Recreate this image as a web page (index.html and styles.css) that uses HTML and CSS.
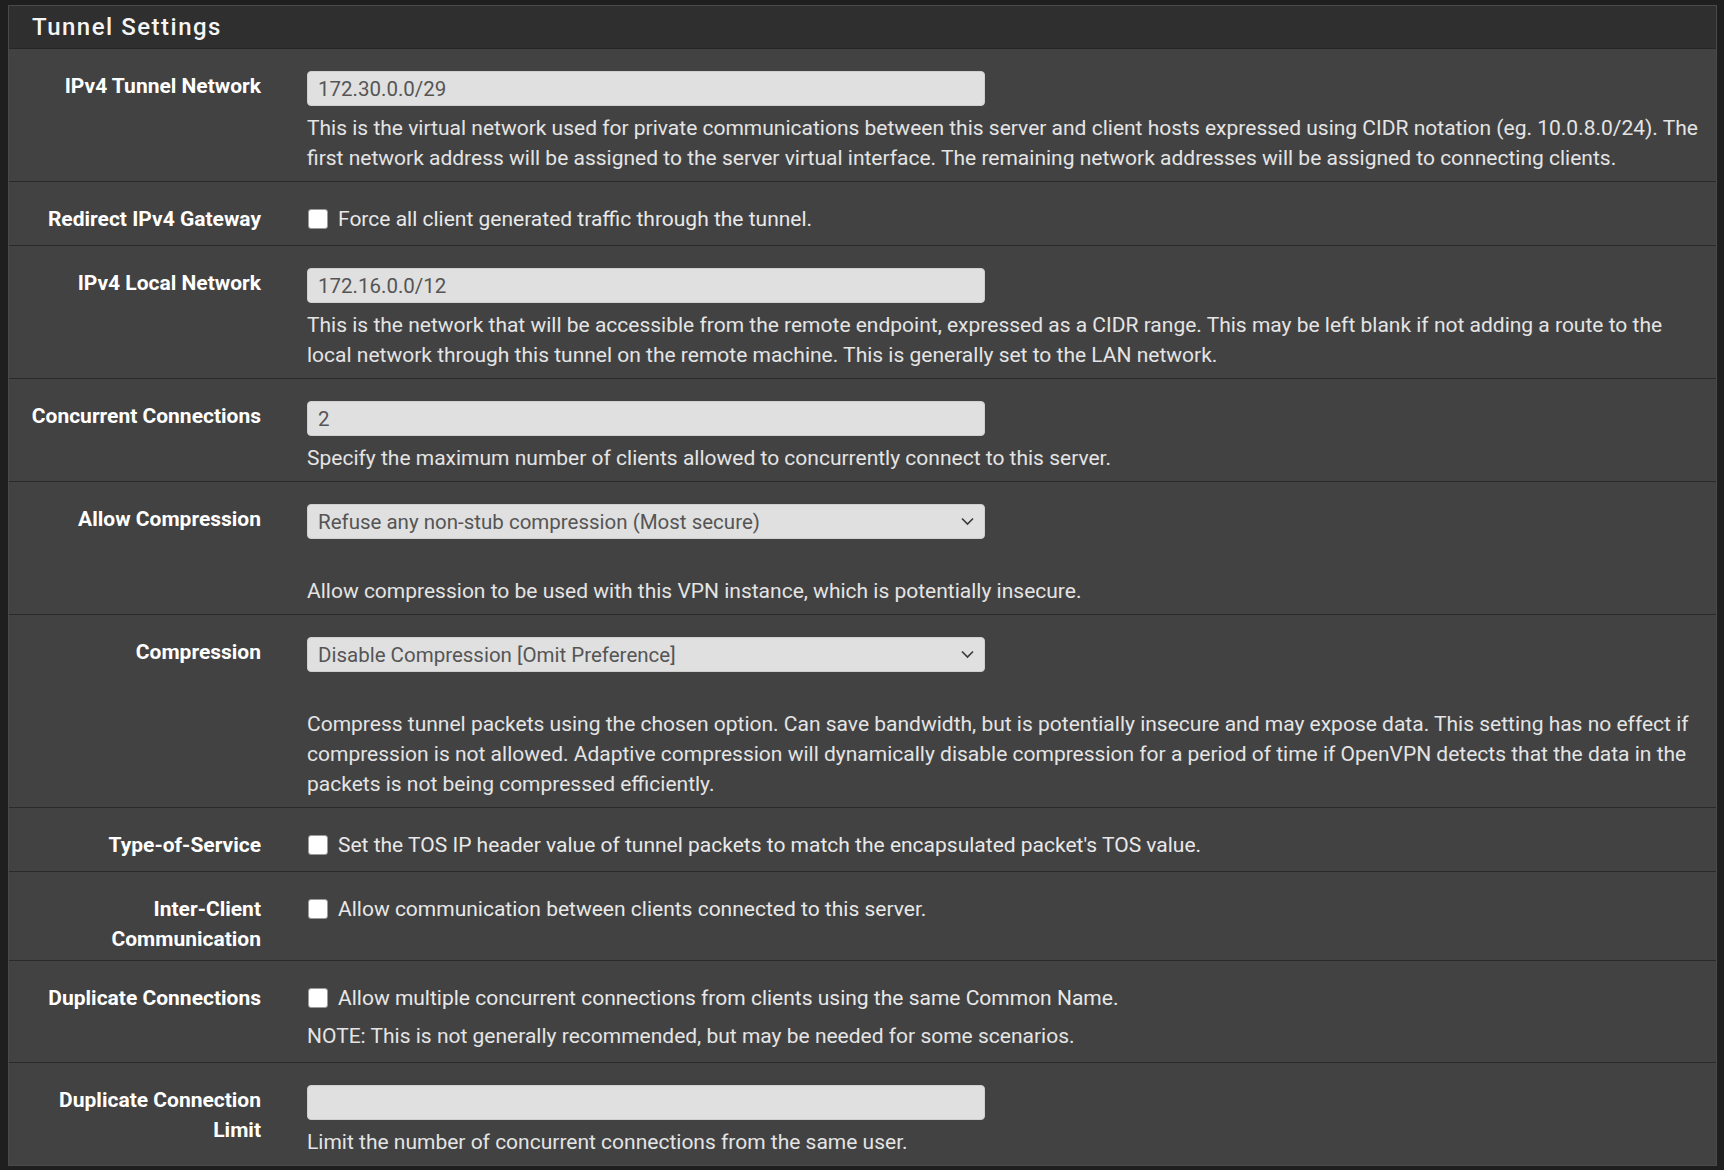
FILE: index.html
```html
<!DOCTYPE html>
<html lang="en">
<head>
    <meta charset="UTF-8">
    <title>Tunnel Settings</title>
    <link rel="stylesheet" href="styles.css">
</head>
<body>
    <div class="panel">
        <div class="panel-heading">Tunnel Settings</div>
        <div class="panel-body">
            <div class="form-row">
                <label class="row-label">IPv4 Tunnel Network</label>
                <div class="row-field">
                    <input type="text" class="text-input" value="172.30.0.0/29">
                    <p class="help">This is the virtual network used for private communications between this server and client hosts expressed using CIDR notation (eg. 10.0.8.0/24). The first network address will be assigned to the server virtual interface. The remaining network addresses will be assigned to connecting clients.</p>
                </div>
            </div>

            <div class="form-row">
                <label class="row-label">Redirect IPv4 Gateway</label>
                <div class="row-field">
                    <label class="check"><input type="checkbox"> Force all client generated traffic through the tunnel.</label>
                </div>
            </div>

            <div class="form-row">
                <label class="row-label">IPv4 Local Network</label>
                <div class="row-field">
                    <input type="text" class="text-input" value="172.16.0.0/12">
                    <p class="help">This is the network that will be accessible from the remote endpoint, expressed as a CIDR range. This may be left blank if not adding a route to the local network through this tunnel on the remote machine. This is generally set to the LAN network.</p>
                </div>
            </div>

            <div class="form-row">
                <label class="row-label">Concurrent Connections</label>
                <div class="row-field">
                    <input type="text" class="text-input" value="2">
                    <p class="help">Specify the maximum number of clients allowed to concurrently connect to this server.</p>
                </div>
            </div>

            <div class="form-row">
                <label class="row-label">Allow Compression</label>
                <div class="row-field">
                    <div class="select-box">
                        <span>Refuse any non-stub compression (Most secure)</span>
                        <svg class="chevron" width="13" height="9" viewBox="0 0 13 9"><path d="M1 1.5 L6.5 7 L12 1.5" fill="none" stroke="#3c3c3c" stroke-width="1.7"/></svg>
                    </div>
                    <p class="help"><br>Allow compression to be used with this VPN instance, which is potentially insecure.</p>
                </div>
            </div>

            <div class="form-row">
                <label class="row-label">Compression</label>
                <div class="row-field">
                    <div class="select-box">
                        <span>Disable Compression [Omit Preference]</span>
                        <svg class="chevron" width="13" height="9" viewBox="0 0 13 9"><path d="M1 1.5 L6.5 7 L12 1.5" fill="none" stroke="#3c3c3c" stroke-width="1.7"/></svg>
                    </div>
                    <p class="help"><br>Compress tunnel packets using the chosen option. Can save bandwidth, but is potentially insecure and may expose data. This setting has no effect if compression is not allowed. Adaptive compression will dynamically disable compression for a period of time if OpenVPN detects that the data in the packets is not being compressed efficiently.</p>
                </div>
            </div>

            <div class="form-row">
                <label class="row-label">Type-of-Service</label>
                <div class="row-field">
                    <label class="check"><input type="checkbox"> Set the TOS IP header value of tunnel packets to match the encapsulated packet's TOS value.</label>
                </div>
            </div>

            <div class="form-row">
                <label class="row-label">Inter-Client<br>Communication</label>
                <div class="row-field">
                    <label class="check"><input type="checkbox"> Allow communication between clients connected to this server.</label>
                </div>
            </div>

            <div class="form-row">
                <label class="row-label">Duplicate Connections</label>
                <div class="row-field">
                    <label class="check"><input type="checkbox"> Allow multiple concurrent connections from clients using the same Common Name.</label>
                    <p class="help note">NOTE: This is not generally recommended, but may be needed for some scenarios.</p>
                </div>
            </div>

            <div class="form-row last">
                <label class="row-label">Duplicate Connection<br>Limit</label>
                <div class="row-field">
                    <input type="text" class="text-input" value="">
                    <p class="help">Limit the number of concurrent connections from the same user.</p>
                </div>
            </div>
        </div>
    </div>
</body>
</html>
```

FILE: styles.css
```css
body {
    font-family: Roboto, "Liberation Sans", sans-serif;
    background-color: #1f1f1f;
    margin: 5px 7px 0 8px;
    color: #f2f2f2;
}

.panel {
    background-color: #424242;
    border: 1px solid #4a4a4a;
}

.panel-heading {
    background-color: #2f2f2f;
    color: #f5f5f5;
    font-size: 24px;
    font-weight: 500;
    letter-spacing: 1.5px;
    height: 42px;
    line-height: 42px;
    padding-left: 23px;
    border-bottom: 1px solid #262626;
}

.form-row {
    display: grid;
    grid-template-columns: 252px 1fr;
    column-gap: 46px;
    padding: 22px 14px 8px 0;
    border-bottom: 1px solid #2a2a2a;
}

.form-row.last {
    border-bottom: none;
}

.row-label {
    text-align: right;
    font-weight: bold;
    font-size: 21px;
    line-height: 30px;
    color: #ffffff;
    margin-bottom: -2px;
}

.row-field {
    font-size: 21px;
    line-height: 30px;
}

.text-input,
.select-box {
    display: flex;
    align-items: center;
    box-sizing: border-box;
    width: 678px;
    height: 35px;
    padding: 0 10px;
    background-color: #e0e0e0;
    border: 1px solid #cfcfcf;
    border-radius: 4px;
    font-family: inherit;
    font-size: 20.5px;
    color: #555;
    margin: 0;
}

.select-box {
    justify-content: space-between;
}

.chevron {
    margin-right: 0;
}

.help {
    margin: 7px 0 0 0;
    color: #e4e4e4;
}

.help.note {
    margin-top: 8px;
    margin-bottom: 3px;
}

.check {
    display: flex;
    align-items: center;
    gap: 10px;
    color: #e8e8e8;
    margin-bottom: 3px;
}

.check input {
    appearance: none;
    width: 20px;
    height: 20px;
    margin: 0 0 0 1px;
    background-color: #fff;
    border: 1px solid #9a9a9a;
    border-radius: 3px;
}
```
